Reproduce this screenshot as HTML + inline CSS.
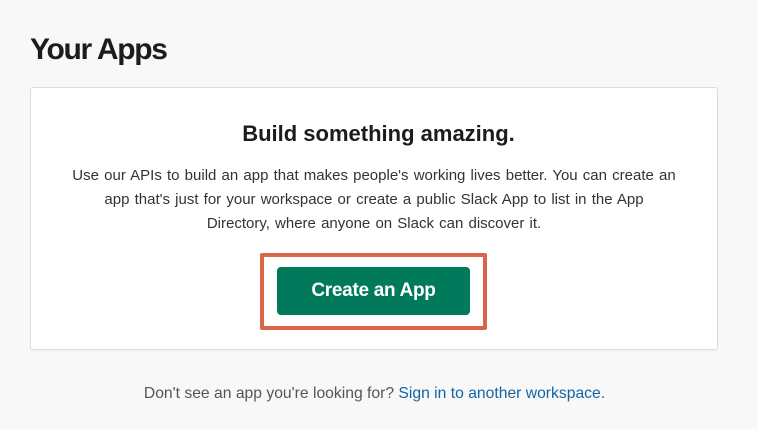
<!DOCTYPE html>
<html><head><meta charset="utf-8"><style>
body{margin:0;width:757px;height:429px;background:#f8f8f8;font-family:"Liberation Sans",sans-serif;position:relative;overflow:hidden;color:#1d1c1d}
h1{position:absolute;left:30px;top:33px;margin:0;font-size:30px;font-weight:bold;letter-spacing:-1.3px}
.card{position:absolute;left:30px;top:87px;width:686px;height:261px;background:#fff;border:1px solid #ddd;border-radius:3px;box-shadow:0 1px 1px rgba(0,0,0,.05)}
h2{position:absolute;left:0;right:0;top:121px;margin:0;text-align:center;font-size:22px;font-weight:bold}
p{position:absolute;left:72px;width:604px;top:164px;margin:0;text-align:center;font-size:15px;line-height:24px;color:#333;word-spacing:1px}
.hl{position:absolute;left:260px;top:253px;width:219px;height:69px;border:4px solid #d9654a;border-radius:2px}
.btn{position:absolute;left:277px;top:267px;width:193px;height:48px;background:#007a5a;border-radius:4px;color:#fff;font-weight:bold;font-size:19px;line-height:48px;text-align:center;letter-spacing:-0.3px}
.ft{position:absolute;left:0;width:749px;top:385px;text-align:center;font-size:15.7px;color:#555}
.ft a{color:#1264a3;text-decoration:none}
</style></head><body>
<h1>Your Apps</h1>
<div class="card"></div>
<h2>Build something amazing.</h2>
<p>Use our APIs to build an app that makes people's working lives better. You can create an app that's just for your workspace or create a public Slack App to list in the App Directory, where anyone on Slack can discover it.</p>
<div class="hl"></div>
<div class="btn">Create an App</div>
<div class="ft">Don't see an app you're looking for? <a>Sign in to another workspace</a>.</div>
</body></html>
